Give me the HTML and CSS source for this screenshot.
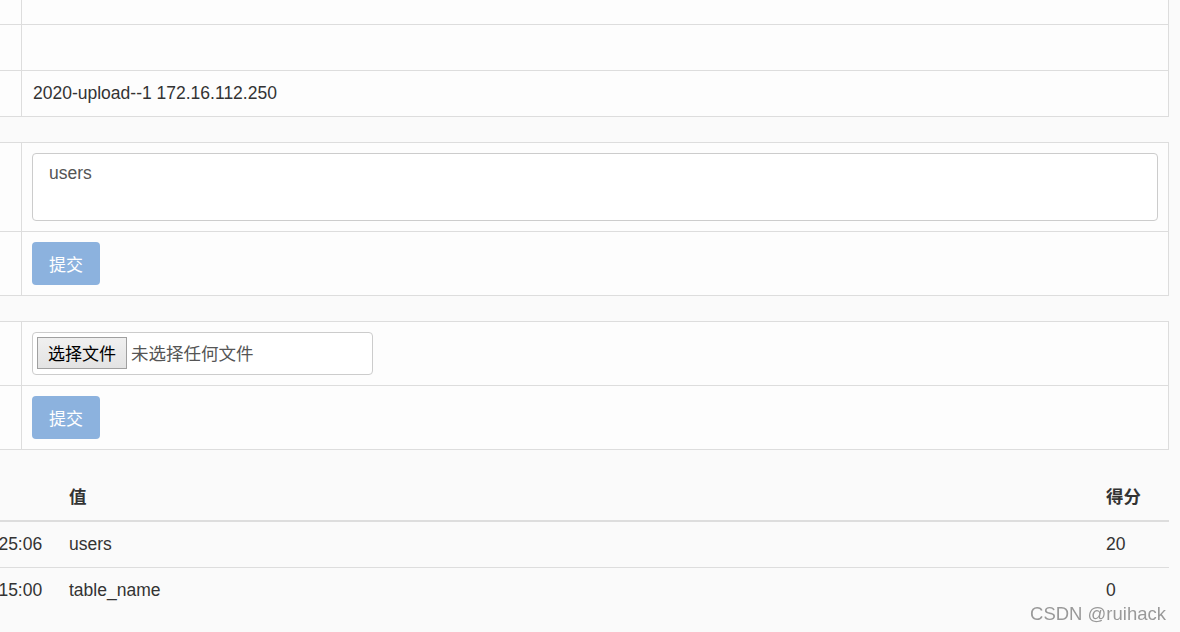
FILE: index.html
```html
<!DOCTYPE html>
<html>
<head>
<meta charset="utf-8">
<link rel="stylesheet" href="styles.css">
</head>
<body>
<div class="page">
  <table class="grid">
    <colgroup><col class="c-label"><col></colgroup>
    <tr><td>&nbsp;</td><td>&nbsp;</td></tr>
    <tr><td>&nbsp;</td><td>&nbsp;</td></tr>
    <tr><td>&nbsp;</td><td>2020-upload--1 172.16.112.250</td></tr>
  </table>

  <table class="grid">
    <colgroup><col class="c-label"><col></colgroup>
    <tr><td>&nbsp;</td><td class="ctl"><textarea class="ta" readonly>users</textarea></td></tr>
    <tr><td>&nbsp;</td><td class="ctl"><span class="btn">提交</span></td></tr>
  </table>

  <table class="grid">
    <colgroup><col class="c-label"><col></colgroup>
    <tr><td>&nbsp;</td><td class="ctl"><div class="file"><span class="file-btn">选择文件</span><span class="file-txt">未选择任何文件</span></div></td></tr>
    <tr><td>&nbsp;</td><td class="ctl"><span class="btn">提交</span></td></tr>
  </table>

  <table class="list">
    <colgroup><col class="c-time"><col><col class="c-score"></colgroup>
    <thead>
      <tr><th>&nbsp;</th><th>值</th><th>得分</th></tr>
    </thead>
    <tbody>
      <tr><td>2021-11-17 14:25:06</td><td>users</td><td>20</td></tr>
      <tr><td>2021-11-17 14:15:00</td><td>table_name</td><td>0</td></tr>
    </tbody>
  </table>
</div>
<div class="mark">CSDN @ruihack</div>
</body>
</html>
```

FILE: styles.css
```css
html, body {
  margin: 0;
  height: 100%;
}
body {
  background: #fafafa;
  overflow: hidden;
  font-family: "Liberation Sans", Arial, "Noto Sans CJK SC", sans-serif;
  font-size: 17.5px;
  line-height: 25px;
  color: #333;
}
.page {
  margin: -22px 0 0 -129px;
  width: 1298px;
}
table {
  border-collapse: collapse;
  width: 100%;
  table-layout: fixed;
}
.grid {
  margin-bottom: 25px;
}
.c-label { width: 150px; }
.grid td {
  border: 1px solid #ddd;
  padding: 10px 10px 10px 11px;
  background: #fdfdfd;
  vertical-align: top;
  white-space: nowrap;
  overflow: hidden;
}
.grid td.ctl {
  padding: 10px;
}
.ta {
  display: block;
  box-sizing: border-box;
  width: 100%;
  height: 68px;
  margin: 0;
  padding: 7px 16px;
  border: 1px solid #ccc;
  border-radius: 4px;
  background: #fff;
  font: inherit;
  color: #555;
  resize: none;
  outline: none;
}
.btn {
  display: block;
  box-sizing: border-box;
  width: 68px;
  height: 43px;
  border-radius: 4px;
  background: #8cb2de;
  color: #fff;
  font-family: "Noto Sans CJK SC", sans-serif;
  font-size: 17px;
  line-height: 43px;
  text-align: center;
}
.file {
  box-sizing: border-box;
  width: 341px;
  height: 43px;
  border: 1px solid #ccc;
  border-radius: 4px;
  background: #fff;
  padding: 4px;
  display: flex;
  align-items: flex-start;
  gap: 4px;
}
.file-btn {
  box-sizing: border-box;
  width: 90px;
  height: 32px;
  border: 1px solid #a0a0a0;
  background: linear-gradient(#f0f0f0, #e3e3e3);
  color: #000;
  font-family: "Noto Sans CJK SC", sans-serif;
  font-size: 17px;
  line-height: 30px;
  text-align: center;
}
.file-txt {
  font-family: "Noto Sans CJK SC", sans-serif;
  font-size: 17.5px;
  line-height: 32px;
  color: #555;
}
.c-time { width: 188px; }
.c-score { width: 73px; }
.list th {
  text-align: left;
  padding: 10px;
  border-bottom: 2px solid #ddd;
  font-family: "Liberation Sans", "Noto Sans CJK SC", sans-serif;
  font-weight: bold;
  white-space: nowrap;
}
.list td {
  padding: 10px;
  border-top: 1px solid #ddd;
  white-space: nowrap;
}
.list tbody tr:first-child td {
  border-top: none;
}
.mark {
  position: fixed;
  right: 14px;
  bottom: 7px;
  font-family: "Liberation Sans", Arial, sans-serif;
  font-size: 18.5px;
  line-height: 22px;
  color: #999;
  text-shadow: 0 0 1px #fff;
}
```
